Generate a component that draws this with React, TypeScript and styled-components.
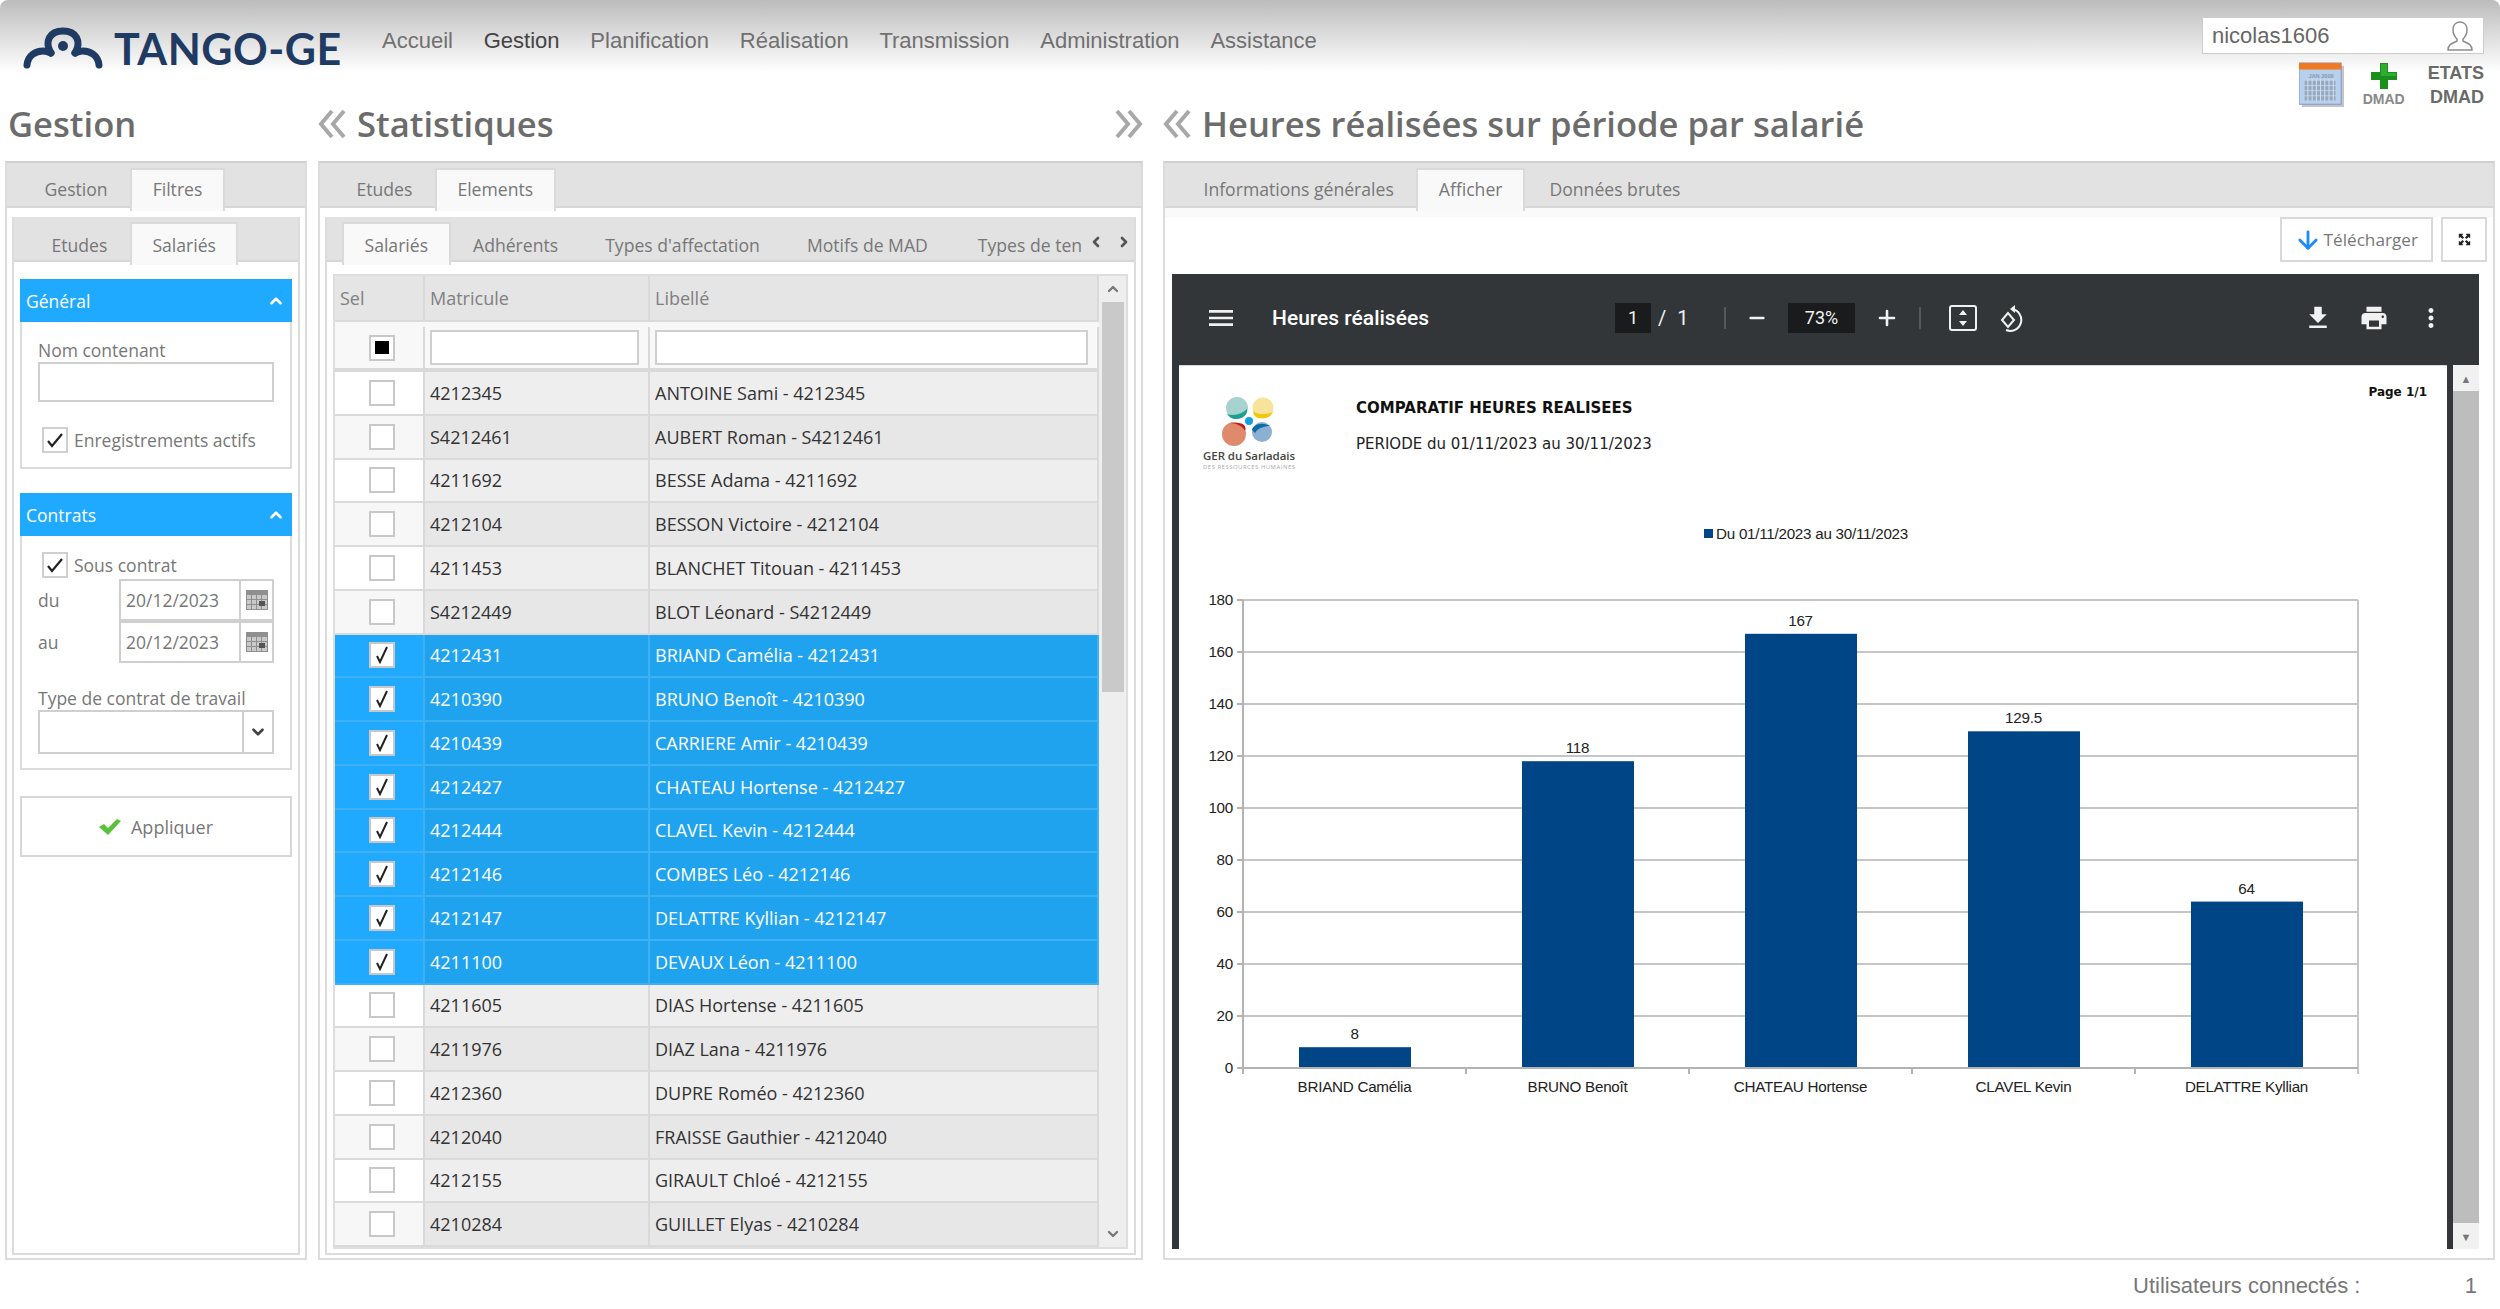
import React from 'react'
import styled, { createGlobalStyle } from 'styled-components'
import { ArrowDown, ChevronDown, ChevronLeft, ChevronRight, ChevronUp, Minus, Plus } from 'lucide-react'

const GlobalStyle = createGlobalStyle`
  html, body { margin: 0; padding: 0; background: #fff; }
  body { font-family: "Open Sans", "Liberation Sans", sans-serif; color: #666; }
  * { box-sizing: border-box; }
`

const Page = styled.div`
  width: 2500px;
  height: 1309px;
  overflow: hidden;
  background: #fff;
`

const Header = styled.header`
  position: relative;
  height: 100px;
  display: flex;
  align-items: flex-start;
  padding: 23px 16px 0 22px;
  background: linear-gradient(#bcbcbc 0, #fff 72px) no-repeat;
  border-radius: 8px 8px 0 0;
`

const Logo = styled.div`
  display: flex;
  align-items: center;
  gap: 10px;
  width: 360px;
  height: 50px;
  color: #1f3b63;
  font-family: Lato, sans-serif;
  font-weight: 700;
  font-size: 43px;
  letter-spacing: 0.5px;
`

const Nav = styled.nav`
  display: flex;
  gap: 30.8px;
  height: 36px;
  align-items: center;
  font-family: "Liberation Sans", Arial, sans-serif;
  font-size: 22px;
`

const NavItem = styled.span<{ $current?: boolean }>`
  color: ${({ $current }) => ($current ? '#444' : '#707070')};
`

const UserArea = styled.div`
  margin-left: auto;
  width: 282px;
  display: flex;
  flex-direction: column;
  margin-top: -6px;
`

const UserBox = styled.div`
  height: 37px;
  display: flex;
  align-items: center;
  justify-content: space-between;
  padding: 0 10px 0 9px;
  background: #fff;
  border: 1px solid #ccc;
  font-family: "Liberation Sans", Arial, sans-serif;
  font-size: 22px;
  color: #666;
`

const Shortcuts = styled.div`
  display: flex;
  justify-content: flex-end;
  margin-top: 8px;
  font-family: "Liberation Sans", Arial, sans-serif;
  font-weight: 700;
  color: #6a6a6a;
`

const ShortcutStack = styled.div`
  display: flex;
  flex-direction: column;
  align-items: center;
  margin: 1px 23px 0 19px;
  font-size: 14px;
  color: #888;
  line-height: 20px;
`

const ShortcutText = styled.div`
  display: flex;
  flex-direction: column;
  align-items: flex-end;
  margin-top: -1px;
  font-size: 18px;
  line-height: 24px;
`

const Columns = styled.div`
  display: grid;
  grid-template-columns: 302px 825px 1332px;
  column-gap: 11px;
  padding-left: 5px;
  & > :nth-child(3) {
    margin-left: 9px;
    width: 1332px;
  }
`

const TitleRow = styled(Columns)`
  height: 61px;
`

const TitleCell = styled.div<{ $inset?: number }>`
  display: flex;
  align-items: center;
  padding-bottom: 14px;
  padding-left: ${({ $inset }) => $inset ?? 0}px;
  font-weight: 600;
  font-size: 34.6px;
  color: #6c6c6c;
  white-space: nowrap;
`

const TitleLabel = styled.span`
  margin-left: 10px;
  flex: 1;
`

const Panels = styled(Columns)`
  height: 1096px;
`

const Panel = styled.section`
  display: flex;
  flex-direction: column;
  min-width: 0;
  height: 100%;
  background: #fff;
  border: 2px solid #dcdcdc;
  border-top-color: #cfcfcf;
`

const TabBar = styled.div<{ $pad: number; $height?: number }>`
  display: flex;
  flex: none;
  height: ${({ $height }) => $height ?? 45}px;
  padding: 5px 0 0 ${({ $pad }) => $pad}px;
  background: #e2e2e2;
  border-bottom: 2px solid #d6d6d6;
  position: relative;
`

const TabStrip = styled.div`
  display: flex;
  flex: 1;
  min-width: 0;
  margin-bottom: -5px;
  overflow: hidden;
`

const Tab = styled.div<{ $active?: boolean; $gap?: number }>`
  flex: none;
  height: 43px;
  padding: 0 20.5px;
  margin-left: ${({ $gap }) => $gap ?? 0}px;
  display: flex;
  align-items: center;
  font-size: 17.6px;
  white-space: nowrap;
  color: #777;
  border: 2px solid transparent;
  border-bottom: 0;
  ${({ $active }) => $active && 'background: #f9f9f9; border-color: #dadada;'}
`

const OuterTab = styled(Tab)`
  padding-bottom: 3px;
`

const TabArrows = styled.div`
  flex: none;
  width: 46px;
  display: flex;
  gap: 12px;
  padding-top: 12px;
  color: #555;
`

const InnerPanel = styled.div`
  flex: 1;
  min-height: 0;
  margin: 9px 5px 3px 5px;
  display: flex;
  flex-direction: column;
  border: 2px solid #dcdcdc;
  border-top: 0;
  background: #fff;
`

const PanelBody = styled.div`
  flex: 1;
  min-height: 0;
  display: flex;
  flex-direction: column;
  padding: 12px 6px 4px;
`

const FilterBody = styled.div`
  flex: 1;
  padding: 17px 6px 0;
`

const Section = styled.div`
  & + & {
    margin-top: 24px;
  }
`

const SectionHead = styled.div`
  height: 43px;
  display: flex;
  align-items: center;
  justify-content: space-between;
  padding: 0 7px 0 6px;
  background: #1fa9ff;
  color: #fff;
  font-size: 17.5px;
`

const SectionBody = styled.div<{ $top?: number }>`
  padding: ${({ $top }) => $top ?? 18}px 16px 14px;
  border: 2px solid #dcdcdc;
  border-top: 0;
  font-size: 17.5px;
  color: #777;
`

const FieldLabel = styled.div<{ $top?: number }>`
  height: 22px;
  margin-top: ${({ $top }) => $top ?? 0}px;
  line-height: 20px;
  font-size: 17.5px;
  color: #777;
  white-space: nowrap;
`

const TextInput = styled.div<{ $height?: number }>`
  height: ${({ $height }) => $height ?? 40}px;
  background: #fff;
  border: 2px solid #cfcfcf;
`

const CheckRow = styled.div<{ $top?: number; $bottom?: number }>`
  display: flex;
  align-items: center;
  gap: 6px;
  margin: ${({ $top }) => $top ?? 0}px 0 ${({ $bottom }) => $bottom ?? 0}px 4px;
  height: 26px;
  white-space: nowrap;
`

const CheckBox = styled.span`
  flex: none;
  width: 26px;
  height: 26px;
  display: flex;
  align-items: center;
  justify-content: center;
  background: #fff;
  border: 2px solid #cfcfcf;
`

const DateRow = styled.div`
  display: flex;
  align-items: center;
  height: 42px;
`

const DateLabel = styled.span`
  width: 81px;
`

const DateField = styled.div`
  flex: 1;
  height: 42px;
  display: flex;
  align-items: center;
  border: 2px solid #cfcfcf;
  padding-left: 5px;
  background: #fff;
  color: #777;
  font-size: 17.5px;
`

const DateValue = styled.span`
  flex: 1;
`

const AddOn = styled.span`
  flex: none;
  width: 33px;
  height: 100%;
  display: flex;
  align-items: center;
  justify-content: center;
  border-left: 2px solid #cfcfcf;
`

const SelectInput = styled.div`
  height: 44px;
  display: flex;
  justify-content: flex-end;
  border: 2px solid #cfcfcf;
  background: #fff;
  color: #444;
`

const SelectAddOn = styled(AddOn)`
  width: 30px;
`

const ApplyButton = styled.div`
  height: 61px;
  margin-top: 26px;
  display: flex;
  align-items: center;
  justify-content: center;
  gap: 10px;
  border: 2px solid #d6d6d6;
  background: #fff;
  color: #777;
  font-size: 18px;
`

const GridFrame = styled.div`
  flex: 1;
  min-height: 0;
  display: flex;
  border: 2px solid #dedede;
`

const GridTable = styled.div`
  flex: 1;
  min-width: 0;
`

const GridRow = styled.div<{ $kind: 'head' | 'filter' | 'odd' | 'even' | 'selected' }>`
  display: grid;
  grid-template-columns: 90px 225px 1fr;
  height: ${({ $kind }) => ($kind === 'head' ? 46 : $kind === 'filter' ? 50 : 43.75)}px;
  padding-top: ${({ $kind }) => ($kind === 'filter' ? 5 : 0)}px;
  font-size: 18px;
  color: ${({ $kind }) => ($kind === 'selected' ? '#fff' : $kind === 'head' ? '#808080' : '#333')};
  background: ${({ $kind }) =>
    ({ head: '#e5e5e5', filter: '#f8f8f8', odd: '#eee', even: '#e7e7e7', selected: '#1fa3ef' })[$kind]};
  border-bottom: ${({ $kind }) =>
    $kind === 'filter' ? '4px solid #d9d9d9' : $kind === 'selected' ? '2px solid #3fb0f2' : '2px solid #dadada'};
`

const GridCell = styled.div<{ $sel?: string }>`
  display: flex;
  align-items: center;
  padding: 0 5px;
  white-space: nowrap;
  border-right: 2px solid ${({ $sel }) => ($sel === 'selected' ? '#3fb0f2' : '#d9d9d9')};
`

const SelCell = styled(GridCell)<{ $bg?: string }>`
  padding-left: 34px;
  background: ${({ $bg }) => $bg ?? 'transparent'};
`

const FilterCell = styled(GridCell)`
  padding-right: 9px;
`

const RowBox = styled(CheckBox)`
  border-color: #c8c8c8;
`

const HalfMark = styled.span`
  width: 14px;
  height: 13px;
  background: #000;
`

const FilterField = styled(TextInput)`
  width: 100%;
  height: 35px;
`

const Scrollbar = styled.div`
  flex: none;
  width: 27px;
  display: flex;
  flex-direction: column;
  align-items: center;
  background: #eeeeee;
  color: #777;
`

const ScrollCap = styled.div`
  flex: none;
  height: 26px;
  display: flex;
  align-items: center;
  justify-content: center;
`

const ScrollThumb = styled.div<{ $height: number }>`
  flex: none;
  width: 22px;
  height: ${({ $height }) => $height}px;
  background: #c9c9c9;
`

const ScrollRest = styled.div`
  flex: 1;
`

const ViewToolbar = styled.div`
  flex: none;
  height: 66px;
  display: flex;
  align-items: flex-start;
  justify-content: flex-end;
  gap: 8px;
  padding: 0 6px 0 0;
  border-top: 9px solid #fafafa;
`

const ViewButton = styled.div`
  height: 45px;
  display: flex;
  align-items: center;
  gap: 2px;
  padding: 0 13px 0 12px;
  border: 2px solid #d9d9d9;
  background: #fff;
  color: #777;
  font-size: 17.2px;
`

const ViewIconButton = styled(ViewButton)`
  width: 46px;
  padding: 0;
  justify-content: center;
`

const Viewer = styled.div`
  flex: 1;
  min-height: 0;
  margin: 0 14px 9px 7px;
  display: flex;
  flex-direction: column;
  background: #323639;
`

const ViewerBar = styled.div`
  flex: none;
  height: 91px;
  display: flex;
  align-items: center;
  color: #f1f1f1;
  font-family: Roboto, sans-serif;
  font-size: 20px;
  padding: 0 0 4px 33px;
`

const ViewerTitle = styled.span`
  width: 343px;
  margin-left: 35px;
  font-weight: 500;
  font-size: 21px;
  color: #fff;
`

const PageField = styled.span<{ $width: number; $left?: number }>`
  width: ${({ $width }) => $width}px;
  height: 30px;
  margin-left: ${({ $left }) => $left ?? 0}px;
  display: flex;
  align-items: center;
  justify-content: center;
  background: #191b1c;
  font-size: 18px;
`

const PageCount = styled.span`
  width: 73px;
  padding-left: 7px;
  word-spacing: 6px;
  white-space: pre;
`

const BarDivider = styled.span`
  width: 2px;
  height: 22px;
  background: #55585b;
`

const BarIcon = styled.span<{ $left?: number }>`
  display: flex;
  margin-left: ${({ $left }) => $left ?? 0}px;
`

const ViewerMain = styled.div`
  flex: 1;
  min-height: 0;
  display: flex;
  padding-left: 7px;
`

const PdfPage = styled.div`
  width: 1268px;
  background: #fff;
  border-top: 1px solid #d8d8d8;
  padding-top: 19px;
`

const PdfHead = styled.div`
  display: grid;
  grid-template-columns: 153px 1fr auto;
  padding: 0 20px 0 24px;
  color: #111;
`

const PdfLogo = styled.svg`
  display: block;
  margin-top: 10px;
`

const PdfTitle = styled.div`
  margin-top: 14px;
  font-family: "DejaVu Sans", sans-serif;
  font-weight: 700;
  font-size: 15px;
  line-height: 18px;
`

const PdfPeriod = styled.div`
  margin-top: 18px;
  font-family: "DejaVu Sans", sans-serif;
  font-size: 15px;
  line-height: 18px;
  color: #222;
`

const PdfPageNo = styled.div`
  font-family: "DejaVu Sans", sans-serif;
  font-weight: 700;
  font-size: 12px;
  line-height: 14px;
`

const Legend = styled.div`
  display: flex;
  align-items: center;
  gap: 3px;
  margin-top: 49px;
  padding-left: 525px;
  height: 18px;
  font-family: "Liberation Sans", sans-serif;
  font-size: 15.2px;
  letter-spacing: -0.25px;
  color: #222;
`

const LegendMark = styled.span`
  width: 9px;
  height: 9px;
  background: #004586;
`

const ChartSvg = styled.svg`
  display: block;
  margin-top: 28px;
  font-family: "Liberation Sans", sans-serif;
  font-size: 15.2px;
  letter-spacing: -0.25px;
  fill: #222;
`

const PdfScroll = styled.div`
  flex: none;
  width: 26px;
  margin-left: 6px;
  display: flex;
  flex-direction: column;
  align-items: center;
  background: #f1f1f1;
  color: #777;
  font-size: 11px;
`

const PdfScrollCap = styled.div`
  flex: none;
  height: 26px;
  display: flex;
  align-items: center;
  justify-content: center;
`

const PdfScrollThumb = styled.div`
  flex: 1;
  width: 100%;
  background: #bdbdbd;
`

const Footer = styled.footer`
  height: 52px;
  display: flex;
  align-items: center;
  padding: 12px 23px 6px 2133px;
  font-family: "Liberation Sans", Arial, sans-serif;
  font-size: 22px;
  color: #777;
`

const FooterCount = styled.span`
  margin-left: auto;
`

const rows: [string, string][] = [
  ['4212345', 'ANTOINE Sami'],
  ['S4212461', 'AUBERT Roman'],
  ['4211692', 'BESSE Adama'],
  ['4212104', 'BESSON Victoire'],
  ['4211453', 'BLANCHET Titouan'],
  ['S4212449', 'BLOT Léonard'],
  ['4212431', 'BRIAND Camélia'],
  ['4210390', 'BRUNO Benoît'],
  ['4210439', 'CARRIERE Amir'],
  ['4212427', 'CHATEAU Hortense'],
  ['4212444', 'CLAVEL Kevin'],
  ['4212146', 'COMBES Léo'],
  ['4212147', 'DELATTRE Kyllian'],
  ['4211100', 'DEVAUX Léon'],
  ['4211605', 'DIAS Hortense'],
  ['4211976', 'DIAZ Lana'],
  ['4212360', 'DUPRE Roméo'],
  ['4212040', 'FRAISSE Gauthier'],
  ['4212155', 'GIRAULT Chloé'],
  ['4210284', 'GUILLET Elyas'],
]

const bars = [
  { name: 'BRIAND Camélia', value: 8 },
  { name: 'BRUNO Benoît', value: 118 },
  { name: 'CHATEAU Hortense', value: 167 },
  { name: 'CLAVEL Kevin', value: 129.5 },
  { name: 'DELATTRE Kyllian', value: 64 },
]

const LogoMark = () => (
  <svg width="82" height="42" viewBox="0 0 82 42" fill="none" stroke="#1f3b63" strokeWidth="7" strokeLinecap="round">
    <path d="M5 38 C6 28 14 24 21 24 C25 24 27 25 29 26" />
    <path d="M29 26 C22 14 28 4 41 4 C54 4 60 14 53 26" />
    <path d="M53 26 C55 25 57 24 61 24 C68 24 76 28 77 38" />
    <circle cx="41" cy="19" r="5" fill="#1f3b63" stroke="none" />
  </svg>
)

const UserIcon = () => (
  <svg width="26" height="30" viewBox="0 0 26 30" fill="none" stroke="#8c8c8c" strokeWidth="1.5">
    <path d="M13 1 C18 1 20 5 20 9 C20 13 18 16 16 18 L16 20 C20 22 25 23 25 29 L1 29 C1 23 6 22 10 20 L10 18 C8 16 6 13 6 9 C6 5 8 1 13 1 Z" />
  </svg>
)

const BigCalendar = () => (
  <svg width="45" height="46" viewBox="0 0 48 47">
    <rect x="3" y="3" width="45" height="44" fill="#c5c5c5" />
    <rect x="0" y="0" width="45" height="44" fill="#b7d0ee" stroke="#7f96c4" />
    <rect x="0" y="0" width="45" height="7" fill="#f07a22" />
    <text x="10" y="16" fontFamily="Liberation Sans" fontSize="6" fill="#8b98aa">JAN 2008</text>
    {[0, 1, 2, 3].map((r) => (
      <rect key={r} x="6" y={19 + r * 5.5} width="33" height="4.5" fill="#98a9bd" />
    ))}
    {[0, 1, 2, 3, 4, 5, 6].map((c) => (
      <rect key={c} x={9 + c * 4.5} y="17" width="1" height="24" fill="#d6e3f3" />
    ))}
  </svg>
)

const GreenPlus = () => (
  <svg width="26" height="26" viewBox="0 0 26 26">
    <path d="M9 0 H17 V9 H26 V17 H17 V26 H9 V17 H0 V9 H9 Z" fill="#1b8f1b" />
    <path d="M10 1 H16 V10 H25 V13 H10 Z" fill="#2eae2e" />
  </svg>
)

const Tick = () => (
  <svg width="18" height="16" viewBox="0 0 18 16" fill="none" stroke="#222" strokeWidth="2.2">
    <path d="M2 9 L6 14 L16 2" />
  </svg>
)

const RowTick = () => (
  <svg width="14" height="18" viewBox="0 0 14 18" fill="none" stroke="#222" strokeWidth="2">
    <path d="M2 10 L5 16 L12 1" />
  </svg>
)

const MiniCalendar = () => (
  <svg width="22" height="20" viewBox="0 0 22 20">
    <rect width="22" height="20" fill="#8f8f8f" />
    <rect x="1" y="5" width="20" height="14" fill="#c9c9c9" />
    {[5, 10, 15].map((x) => (
      <rect key={x} x={x} y="5" width="1" height="14" fill="#8f8f8f" />
    ))}
    {[9, 14].map((y) => (
      <rect key={y} x="1" y={y} width="20" height="1" fill="#8f8f8f" />
    ))}
    <rect x="13" y="11" width="6" height="5" fill="#555" />
  </svg>
)

const GreenTick = () => (
  <svg width="22" height="18" viewBox="0 0 22 18">
    <path d="M0 9 L5 6 L9 10 L18 1 L22 3 L9 17 Z" fill="#5cc13a" />
  </svg>
)

const DoubleChevron = ({ right }: { right?: boolean }) => (
  <svg width="29" height="30" viewBox="0 0 29 30" fill="none" stroke="#a8a8a8" strokeWidth="4">
    <g transform={right ? 'matrix(-1 0 0 1 29 0)' : undefined}>
      <path d="M14 2 L3 15 L14 28" />
      <path d="M26 2 L15 15 L26 28" />
    </g>
  </svg>
)

const FullscreenIcon = () => (
  <svg width="13" height="13" viewBox="0 0 16 16" fill="#222">
    <path d="M1 1 L6.5 1 L5 3 L7.5 5.5 L5.5 7.5 L3 5 L1 6.5 Z" />
    <path d="M15 1 L15 6.5 L13 5 L10.5 7.5 L8.5 5.5 L11 3 L9.5 1 Z" />
    <path d="M1 15 L1 9.5 L3 11 L5.5 8.5 L7.5 10.5 L5 13 L6.5 15 Z" />
    <path d="M15 15 L9.5 15 L11 13 L8.5 10.5 L10.5 8.5 L13 11 L15 9.5 Z" />
  </svg>
)

const MaterialIcon = ({ d, size = 30 }: { d: string; size?: number }) => (
  <svg width={size} height={size} viewBox="0 0 24 24" fill="#f1f1f1">
    <path d={d} />
  </svg>
)

const FitIcon = () => (
  <svg width="28" height="26" viewBox="0 0 28 26" fill="none" stroke="#f1f1f1" strokeWidth="2">
    <rect x="1" y="1" width="26" height="24" rx="2" />
    <path d="M14 5 L10 10 H18 Z M14 21 L10 16 H18 Z" fill="#f1f1f1" stroke="none" />
  </svg>
)

const RotateIcon = () => (
  <svg width="26" height="28" viewBox="0 0 26 28" fill="none" stroke="#f1f1f1" strokeWidth="2">
    <path d="M10 9 L4 16 L10 23 L16 16 Z" />
    <path d="M14 5 A11 11 0 1 1 8 26" />
    <path d="M17 1 L12 5 L17 9 Z" fill="#f1f1f1" stroke="none" />
  </svg>
)

const GerLogo = () => (
  <PdfLogo width="93" height="80" viewBox="0 0 93 80">
    <circle cx="34" cy="13" r="11" fill="#a6d3cf" />
    <path d="M24 19 C30 21 38 20 44 14 C45 20 39 24 33 24 C29 24 26 22 24 19 Z" fill="#1f9e93" />
    <circle cx="60" cy="13" r="10.5" fill="#f7e39a" />
    <path d="M50 16 C54 20 63 20 70 17 C67 23 60 24 55 23 C52 22 50 19 50 16 Z" fill="#f0c808" />
    <circle cx="31" cy="39" r="12" fill="#e08a6c" />
    <path d="M27 28 C33 28 40 31 42 36 C44 31 40 28 35 28 C32 28 29 28 27 28 Z" fill="#c8141c" />
    <circle cx="59" cy="37" r="10" fill="#8cb0d2" />
    <path d="M49 35 C50 30 58 26 67 31 C61 31 55 33 52 38 Z" fill="#0f6ba8" />
    <circle cx="46" cy="26" r="4" fill="#16a0e0" />
    <text x="0" y="65" fontFamily="Open Sans, sans-serif" fontSize="11.5" fontWeight="600" fill="#444" textLength="92">GER du Sarladais</text>
    <text x="0" y="74" fontFamily="Open Sans, sans-serif" fontSize="6" fill="#aaa" textLength="92">DES RESSOURCES HUMAINES</text>
  </PdfLogo>
)

// plot area, in page coordinates
const PLOT = { left: 1243, right: 2358, top: 600, bottom: 1068 }

const Chart = () => {
  const stepX = (PLOT.right - PLOT.left) / bars.length
  const scale = (PLOT.bottom - PLOT.top) / 180
  return (
    <ChartSvg width="1268" height="620" viewBox="1179 570 1268 620">
      {[20, 40, 60, 80, 100, 120, 140, 160, 180].map((v) => (
        <line key={v} x1={PLOT.left} x2={PLOT.right} y1={PLOT.bottom - v * scale} y2={PLOT.bottom - v * scale} stroke="#c6c6c6" strokeWidth="2" />
      ))}
      {[0, 20, 40, 60, 80, 100, 120, 140, 160, 180].map((v) => (
        <g key={v}>
          <line x1={PLOT.left - 6} x2={PLOT.left} y1={PLOT.bottom - v * scale} y2={PLOT.bottom - v * scale} stroke="#b3b3b3" strokeWidth="2" />
          <text x={PLOT.left - 10} y={PLOT.bottom - v * scale + 5} textAnchor="end">{v}</text>
        </g>
      ))}
      <line x1={PLOT.left} x2={PLOT.left} y1={PLOT.top} y2={PLOT.bottom + 6} stroke="#b3b3b3" strokeWidth="2" />
      <line x1={PLOT.right} x2={PLOT.right} y1={PLOT.top} y2={PLOT.bottom + 6} stroke="#c6c6c6" strokeWidth="2" />
      {bars.map((b, i) => {
        const x = PLOT.left + stepX * i
        const h = b.value * scale
        return (
          <g key={b.name}>
            <line x1={x} x2={x} y1={PLOT.bottom} y2={PLOT.bottom + 6} stroke="#b3b3b3" strokeWidth="2" />
            <rect x={x + 56} y={PLOT.bottom - h} width="112" height={h} fill="#004586" />
            <text x={x + stepX / 2} y={PLOT.bottom - h - 8} textAnchor="middle">{b.value}</text>
            <text x={x + stepX / 2} y={PLOT.bottom + 24} textAnchor="middle">{b.name}</text>
          </g>
        )
      })}
      <line x1={PLOT.left} x2={PLOT.right} y1={PLOT.bottom} y2={PLOT.bottom} stroke="#b3b3b3" strokeWidth="2" />
    </ChartSvg>
  )
}

const GridBlock = () => (
  <GridFrame>
    <GridTable>
      <GridRow $kind="head">
        <GridCell>Sel</GridCell>
        <GridCell>Matricule</GridCell>
        <GridCell>Libellé</GridCell>
      </GridRow>
      <GridRow $kind="filter">
        <SelCell>
          <RowBox>
            <HalfMark />
          </RowBox>
        </SelCell>
        <FilterCell>
          <FilterField />
        </FilterCell>
        <FilterCell>
          <FilterField />
        </FilterCell>
      </GridRow>
      {rows.map(([code, name], i) => {
        const selected = i >= 6 && i <= 13
        const kind = selected ? 'selected' : i % 2 === 0 ? 'odd' : 'even'
        return (
          <GridRow key={code} $kind={kind}>
            <SelCell $sel={kind} $bg={selected ? '#1fa9ff' : i % 2 === 0 ? '#fff' : '#f7f7f7'}>
              <RowBox>{selected && <RowTick />}</RowBox>
            </SelCell>
            <GridCell $sel={kind}>{code}</GridCell>
            <GridCell $sel={kind}>{`${name} - ${code}`}</GridCell>
          </GridRow>
        )
      })}
    </GridTable>
    <Scrollbar>
      <ScrollCap>
        <ChevronUp size={16} strokeWidth={3.5} />
      </ScrollCap>
      <ScrollThumb $height={390} />
      <ScrollRest />
      <ScrollCap>
        <ChevronDown size={16} strokeWidth={3.5} />
      </ScrollCap>
    </Scrollbar>
  </GridFrame>
)

const App = () => (
  <Page>
    <GlobalStyle />
    <Header>
      <Logo>
        <LogoMark />
        TANGO-GE
      </Logo>
      <Nav>
        <NavItem>Accueil</NavItem>
        <NavItem $current>Gestion</NavItem>
        <NavItem>Planification</NavItem>
        <NavItem>Réalisation</NavItem>
        <NavItem>Transmission</NavItem>
        <NavItem>Administration</NavItem>
        <NavItem>Assistance</NavItem>
      </Nav>
      <UserArea>
        <UserBox>
          nicolas1606
          <UserIcon />
        </UserBox>
        <Shortcuts>
          <BigCalendar />
          <ShortcutStack>
            <GreenPlus />
            <span>DMAD</span>
          </ShortcutStack>
          <ShortcutText>
            <span>ETATS</span>
            <span>DMAD</span>
          </ShortcutText>
        </Shortcuts>
      </UserArea>
    </Header>

    <TitleRow>
      <TitleCell $inset={3}>Gestion</TitleCell>
      <TitleCell>
        <DoubleChevron />
        <TitleLabel>Statistiques</TitleLabel>
        <DoubleChevron right />
      </TitleCell>
      <TitleCell>
        <DoubleChevron />
        <TitleLabel>Heures réalisées sur période par salarié</TitleLabel>
      </TitleCell>
    </TitleRow>

    <Panels>
      <Panel>
        <TabBar $pad={15}>
          <TabStrip>
            <OuterTab>Gestion</OuterTab>
            <OuterTab $active>Filtres</OuterTab>
          </TabStrip>
        </TabBar>
        <InnerPanel>
          <TabBar $pad={15}>
            <TabStrip>
              <Tab>Etudes</Tab>
              <Tab $active>Salariés</Tab>
            </TabStrip>
          </TabBar>
          <FilterBody>
            <Section>
              <SectionHead>
                Général
                <ChevronUp size={18} strokeWidth={3.5} />
              </SectionHead>
              <SectionBody>
                <FieldLabel>Nom contenant</FieldLabel>
                <TextInput />
                <CheckRow $top={25}>
                  <CheckBox>
                    <Tick />
                  </CheckBox>
                  Enregistrements actifs
                </CheckRow>
              </SectionBody>
            </Section>
            <Section>
              <SectionHead>
                Contrats
                <ChevronUp size={18} strokeWidth={3.5} />
              </SectionHead>
              <SectionBody $top={16}>
                <CheckRow $bottom={1}>
                  <CheckBox>
                    <Tick />
                  </CheckBox>
                  Sous contrat
                </CheckRow>
                <DateRow>
                  <DateLabel>du</DateLabel>
                  <DateField>
                    <DateValue>20/12/2023</DateValue>
                    <AddOn>
                      <MiniCalendar />
                    </AddOn>
                  </DateField>
                </DateRow>
                <DateRow>
                  <DateLabel>au</DateLabel>
                  <DateField>
                    <DateValue>20/12/2023</DateValue>
                    <AddOn>
                      <MiniCalendar />
                    </AddOn>
                  </DateField>
                </DateRow>
                <FieldLabel $top={25}>Type de contrat de travail</FieldLabel>
                <SelectInput>
                  <SelectAddOn>
                    <ChevronDown size={18} strokeWidth={3.5} />
                  </SelectAddOn>
                </SelectInput>
              </SectionBody>
            </Section>
            <ApplyButton>
              <GreenTick />
              Appliquer
            </ApplyButton>
          </FilterBody>
        </InnerPanel>
      </Panel>

      <Panel>
        <TabBar $pad={14}>
          <TabStrip>
            <OuterTab>Etudes</OuterTab>
            <OuterTab $active>Elements</OuterTab>
          </TabStrip>
        </TabBar>
        <InnerPanel>
          <TabBar $pad={15}>
            <TabStrip>
              <Tab $active>Salariés</Tab>
              <Tab>Adhérents</Tab>
              <Tab $gap={2}>Types d'affectation</Tab>
              <Tab $gap={2}>Motifs de MAD</Tab>
              <Tab $gap={5}>Types de ten</Tab>
            </TabStrip>
            <TabArrows>
              <ChevronLeft size={16} strokeWidth={4} />
              <ChevronRight size={16} strokeWidth={4} />
            </TabArrows>
          </TabBar>
          <PanelBody>
            <GridBlock />
          </PanelBody>
        </InnerPanel>
      </Panel>

      <Panel>
        <TabBar $pad={16}>
          <TabStrip>
            <OuterTab>Informations générales</OuterTab>
            <OuterTab $active>Afficher</OuterTab>
            <OuterTab $gap={2}>Données brutes</OuterTab>
          </TabStrip>
        </TabBar>
        <ViewToolbar>
          <ViewButton>
            <ArrowDown size={28} color="#1a8cff" strokeWidth={2.4} />
            Télécharger
          </ViewButton>
          <ViewIconButton>
            <FullscreenIcon />
          </ViewIconButton>
        </ViewToolbar>
        <Viewer>
          <ViewerBar>
            <MaterialIcon d="M3 18h18v-2H3v2zm0-5h18v-2H3v2zm0-7v2h18V6H3z" size={32} />
            <ViewerTitle>Heures réalisées</ViewerTitle>
            <PageField $width={36}>1</PageField>
            <PageCount>/ 1</PageCount>
            <BarDivider />
            <BarIcon $left={20}>
              <Minus size={22} strokeWidth={2.6} />
            </BarIcon>
            <PageField $width={67} $left={20}>73%</PageField>
            <BarIcon $left={20}>
              <Plus size={24} strokeWidth={2.6} />
            </BarIcon>
            <BarIcon $left={20}>
              <BarDivider />
            </BarIcon>
            <BarIcon $left={28}>
              <FitIcon />
            </BarIcon>
            <BarIcon $left={21}>
              <RotateIcon />
            </BarIcon>
            <BarIcon $left={279}>
              <MaterialIcon d="M19 9h-4V3H9v6H5l7 7 7-7zM5 18v2h14v-2H5z" />
            </BarIcon>
            <BarIcon $left={26}>
              <MaterialIcon d="M19 8H5c-1.66 0-3 1.34-3 3v6h4v4h12v-4h4v-6c0-1.66-1.34-3-3-3zm-3 11H8v-5h8v5zm3-7c-.55 0-1-.45-1-1s.45-1 1-1 1 .45 1 1-.45 1-1 1zm-1-9H6v4h12V3z" />
            </BarIcon>
            <BarIcon $left={27}>
              <MaterialIcon d="M12 8c1.1 0 2-.9 2-2s-.9-2-2-2-2 .9-2 2 .9 2 2 2zm0 2c-1.1 0-2 .9-2 2s.9 2 2 2 2-.9 2-2-.9-2-2-2zm0 6c-1.1 0-2 .9-2 2s.9 2 2 2 2-.9 2-2-.9-2-2-2z" />
            </BarIcon>
          </ViewerBar>
          <ViewerMain>
            <PdfPage>
              <PdfHead>
                <GerLogo />
                <div>
                  <PdfTitle>COMPARATIF HEURES REALISEES</PdfTitle>
                  <PdfPeriod>PERIODE du 01/11/2023 au 30/11/2023</PdfPeriod>
                </div>
                <PdfPageNo>Page 1/1</PdfPageNo>
              </PdfHead>
              <Legend>
                <LegendMark />
                Du 01/11/2023 au 30/11/2023
              </Legend>
              <Chart />
            </PdfPage>
            <PdfScroll>
              <PdfScrollCap>▲</PdfScrollCap>
              <PdfScrollThumb />
              <PdfScrollCap>▼</PdfScrollCap>
            </PdfScroll>
          </ViewerMain>
        </Viewer>
      </Panel>
    </Panels>

    <Footer>
      Utilisateurs connectés :
      <FooterCount>1</FooterCount>
    </Footer>
  </Page>
)

export default App
